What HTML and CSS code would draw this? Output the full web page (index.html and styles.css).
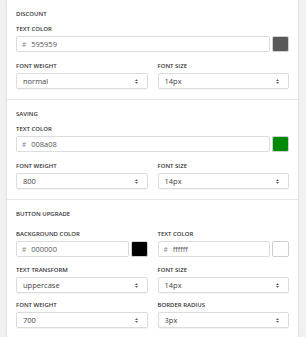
FILE: index.html
```html
<!DOCTYPE html>
<html>
<head>
<meta charset="utf-8">
<link rel="stylesheet" href="styles.css">
</head>
<body>
<div class="card">
  <div class="section">
    <div class="title">DISCOUNT</div>
    <div class="field">
      <div class="label">TEXT COLOR</div>
      <div class="colorrow">
        <div class="input"><span class="hash">#</span>595959</div>
        <div class="swatch" style="background:#595959"></div>
      </div>
    </div>
    <div class="grid">
      <div class="field">
        <div class="label">FONT WEIGHT</div>
        <div class="select">normal<svg class="arrows" viewBox="0 0 4 6"><path d="M0 2.4L2 0L4 2.4Z M0 3.6L2 6L4 3.6Z"/></svg></div>
      </div>
      <div class="field">
        <div class="label">FONT SIZE</div>
        <div class="select">14px<svg class="arrows" viewBox="0 0 4 6"><path d="M0 2.4L2 0L4 2.4Z M0 3.6L2 6L4 3.6Z"/></svg></div>
      </div>
    </div>
  </div>
  <div class="section">
    <div class="title">SAVING</div>
    <div class="field">
      <div class="label">TEXT COLOR</div>
      <div class="colorrow">
        <div class="input"><span class="hash">#</span>008a08</div>
        <div class="swatch" style="background:#008a08"></div>
      </div>
    </div>
    <div class="grid">
      <div class="field">
        <div class="label">FONT WEIGHT</div>
        <div class="select">800<svg class="arrows" viewBox="0 0 4 6"><path d="M0 2.4L2 0L4 2.4Z M0 3.6L2 6L4 3.6Z"/></svg></div>
      </div>
      <div class="field">
        <div class="label">FONT SIZE</div>
        <div class="select">14px<svg class="arrows" viewBox="0 0 4 6"><path d="M0 2.4L2 0L4 2.4Z M0 3.6L2 6L4 3.6Z"/></svg></div>
      </div>
    </div>
  </div>
  <div class="section last">
    <div class="title">BUTTON UPGRADE</div>
    <div class="grid first">
      <div class="field">
        <div class="label">BACKGROUND COLOR</div>
        <div class="colorrow">
          <div class="input"><span class="hash">#</span>000000</div>
          <div class="swatch" style="background:#000000"></div>
        </div>
      </div>
      <div class="field">
        <div class="label">TEXT COLOR</div>
        <div class="colorrow">
          <div class="input"><span class="hash">#</span>ffffff</div>
          <div class="swatch" style="background:#ffffff"></div>
        </div>
      </div>
    </div>
    <div class="grid">
      <div class="field">
        <div class="label">TEXT TRANSFORM</div>
        <div class="select">uppercase<svg class="arrows" viewBox="0 0 4 6"><path d="M0 2.4L2 0L4 2.4Z M0 3.6L2 6L4 3.6Z"/></svg></div>
      </div>
      <div class="field">
        <div class="label">FONT SIZE</div>
        <div class="select">14px<svg class="arrows" viewBox="0 0 4 6"><path d="M0 2.4L2 0L4 2.4Z M0 3.6L2 6L4 3.6Z"/></svg></div>
      </div>
    </div>
    <div class="grid">
      <div class="field">
        <div class="label">FONT WEIGHT</div>
        <div class="select">700<svg class="arrows" viewBox="0 0 4 6"><path d="M0 2.4L2 0L4 2.4Z M0 3.6L2 6L4 3.6Z"/></svg></div>
      </div>
      <div class="field">
        <div class="label">BORDER RADIUS</div>
        <div class="select">3px<svg class="arrows" viewBox="0 0 4 6"><path d="M0 2.4L2 0L4 2.4Z M0 3.6L2 6L4 3.6Z"/></svg></div>
      </div>
    </div>
  </div>
</div>
</body>
</html>
```
FILE: styles.css
```css
html, body {
  margin: 0;
  padding: 0;
  background: #f1f1f1;
  font-family: "Open Sans", "Liberation Sans", sans-serif;
}
body {
  width: 306px;
  height: 337px;
  overflow: hidden;
}
.card {
  margin: 0 7px 0 6px;
  background: #fff;
  border: 1px solid #e3e3e3;
  border-top: none;
  border-radius: 0 0 4px 4px;
  box-shadow: 0 1px 1px rgba(0,0,0,0.08);
}
.section {
  padding: 10px 9px 10px 9px;
  border-bottom: 1px solid #e6e6e6;
}
.section.last {
  border-bottom: none;
}
.title {
  font-size: 6px;
  line-height: 8px;
  font-weight: 600;
  color: #333;
  height: 8px;
}
.field {
  display: flex;
  flex-direction: column;
}
.section > .field {
  margin-top: 7px;
}
.label {
  font-size: 6px;
  line-height: 8px;
  height: 8px;
  font-weight: 600;
  color: #333;
  margin-bottom: 3px;
}
.colorrow {
  display: flex;
  gap: 2px;
}
.input {
  flex: 1;
  height: 14px;
  border: 1px solid #dcdcdc;
  border-radius: 2px;
  font-size: 7.5px;
  line-height: 14px;
  color: #555;
  padding-left: 5px;
}
.hash {
  color: #888;
  margin-right: 5px;
  font-size: 6.5px;
}
.swatch {
  width: 15px;
  height: 14px;
  border: 1px solid #cfcfcf;
  border-radius: 2px;
}
.grid {
  display: grid;
  grid-template-columns: 1fr 1fr;
  column-gap: 10px;
  margin-top: 10px;
}
.last .grid {
  margin-top: 9px;
}
.last .grid.first {
  margin-top: 12px;
}
.last .grid:last-child {
  margin-top: 8px;
}
.select {
  position: relative;
  height: 14px;
  border: 1px solid #dcdcdc;
  border-radius: 2px;
  font-size: 7.5px;
  line-height: 14px;
  color: #444;
  padding-left: 6px;
  box-shadow: 0 1px 1px rgba(0,0,0,0.05);
}
.arrows {
  position: absolute;
  right: 9px;
  top: 4.5px;
  width: 3px;
  height: 5px;
  fill: #555;
}
```
